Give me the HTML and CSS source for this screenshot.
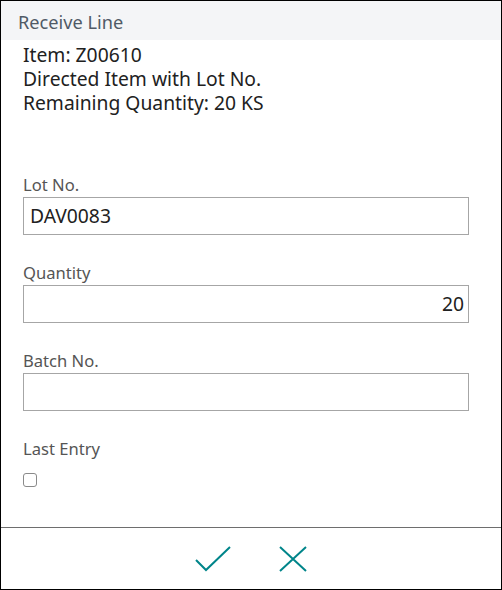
FILE: index.html
```html
<!DOCTYPE html>
<html>
<head>
<meta charset="utf-8">
<link rel="stylesheet" href="styles.css">
</head>
<body>
<div class="frame">
  <div class="header">Receive Line</div>
  <div class="content">
    <div class="info">
      <div>Item: Z00610</div>
      <div>Directed Item with Lot No.</div>
      <div>Remaining Quantity: 20 KS</div>
    </div>
    <div class="fields">
      <div class="field">
        <div class="label">Lot No.</div>
        <div class="input">DAV0083</div>
      </div>
      <div class="field">
        <div class="label">Quantity</div>
        <div class="input num">20</div>
      </div>
      <div class="field">
        <div class="label">Batch No.</div>
        <div class="input"></div>
      </div>
      <div class="field">
        <div class="label">Last Entry</div>
        <div class="checkbox"></div>
      </div>
    </div>
  </div>
  <div class="footer">
    <svg class="icon" width="36" height="26" viewBox="0 0 36 26"><polyline points="1,14 11,24 35,1" fill="none" stroke="#00858a" stroke-width="2"/></svg>
    <svg class="icon" width="28" height="26" viewBox="0 0 28 26"><path d="M1,1 L27,25 M27,1 L1,25" fill="none" stroke="#00858a" stroke-width="2"/></svg>
  </div>
</div>
</body>
</html>
```
FILE: styles.css
```css
html, body {
  margin: 0;
  padding: 0;
  background: #fff;
}
.frame {
  width: 502px;
  height: 590px;
  box-sizing: border-box;
  border: 1px solid #000;
  display: flex;
  flex-direction: column;
  font-family: "Noto Sans", "Open Sans", sans-serif;
  color: #212121;
}
.header {
  height: 39px;
  box-sizing: border-box;
  padding: 4px 0 0 17px;
  background: #f4f5f7;
  color: #505a66;
  font-size: 18.2px;
  line-height: 35px;
  flex: none;
}
.content {
  flex: 1;
  padding: 3px 32px 0 22px;
}
.info {
  font-size: 19.3px;
  line-height: 24px;
}
.fields {
  margin-top: 58px;
}
.field {
  margin-bottom: 26px;
}
.label {
  font-size: 16.6px;
  line-height: 24px;
  color: #555;
}
.input {
  height: 38px;
  box-sizing: border-box;
  border: 1px solid #a6a6a6;
  padding: 0 6px;
  font-size: 19.3px;
  line-height: 36px;
}
.input.num {
  text-align: right;
  padding-right: 4px;
}
.checkbox {
  margin-top: 12px;
  width: 14px;
  height: 14px;
  box-sizing: border-box;
  border: 1px solid #8a8a8a;
  border-radius: 3px;
}
.footer {
  height: 61px;
  flex: none;
  border-top: 1px solid #6e6e6e;
  display: flex;
  justify-content: center;
  align-items: center;
  gap: 48px;
}
.icon {
  display: block;
}
```
